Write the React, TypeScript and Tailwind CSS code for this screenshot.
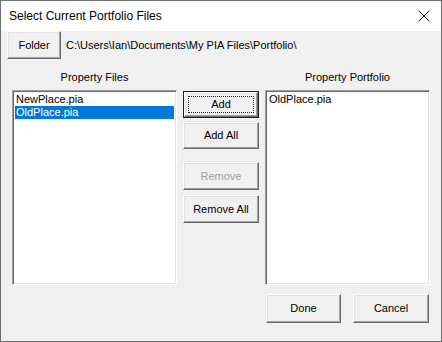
import React from "react";

const ui = { fontFamily: '"Liberation Sans", Arial, sans-serif' };

const raised =
  "border border-t-white border-l-white border-r-[#696969] border-b-[#696969] shadow-[inset_-1px_-1px_0_#a0a0a0,inset_1px_1px_0_#e3e3e3] bg-[#f0f0f0]";

function Btn({
  label,
  w,
  h = 28,
  disabled,
  isDefault,
}: {
  label: string;
  w: string;
  h?: number;
  disabled?: boolean;
  isDefault?: boolean;
}) {
  if (isDefault) {
    return (
      <div className={`${w} border border-[#1e1e1e] flex`} style={{ height: h }}>
        <div className={`flex-1 ${raised} p-[3px] flex`}>
          <div className="flex-1 border border-dotted border-[#222] flex items-center justify-center text-[11px] text-black">
            {label}
          </div>
        </div>
      </div>
    );
  }
  return (
    <div
      className={`${w} ${raised} flex items-center justify-center text-[11px] ${
        disabled ? "text-[#a0a0a0]" : "text-black"
      }`}
      style={{ height: h }}
    >
      {label}
    </div>
  );
}

function ListBox({ items, selected }: { items: string[]; selected?: number }) {
  return (
    <div className="w-[165px] h-[195px] bg-white border border-t-[#a0a0a0] border-l-[#a0a0a0] border-r-white border-b-white shadow-[inset_1px_1px_0_#696969,inset_-1px_-1px_0_#e3e3e3] p-[2px]">
      {items.map((it, i) => (
        <div
          key={it}
          className={`h-[13px] leading-[13px] text-[11px] pl-[1px] ${
            i === selected ? "bg-[#0078d7] text-white" : "text-black"
          }`}
        >
          {it}
        </div>
      ))}
    </div>
  );
}

export default function App() {
  return (
    <div
      className="w-[442px] h-[342px] border border-[#6f6f6f] flex flex-col bg-[#f0f0f0] overflow-hidden"
      style={ui}
    >
      <div className="h-[30px] bg-white flex items-center justify-between pl-[8px] pr-[10px] shrink-0">
        <span className="text-[12px] text-black">Select Current Portfolio Files</span>
        <svg width="12" height="12" viewBox="0 0 12 12" className="mr-[1px]">
          <path d="M0.5 0.5 L11.5 11.5 M11.5 0.5 L0.5 11.5" stroke="#111" strokeWidth="1" />
        </svg>
      </div>

      <div className="flex items-center pl-[6px] h-[28px] shrink-0">
        <Btn label="Folder" w="w-[54px]" />
        <span className="ml-[5px] text-[11px] text-black">C:\Users\Ian\Documents\My PIA Files\Portfolio\</span>
      </div>

      <div className="flex pl-[11px] shrink-0">
        <div className="flex flex-col pt-[11px]">
          <div className="h-[14px] leading-[14px] text-[11px] text-black text-center">Property Files</div>
          <div className="mt-[6px]">
            <ListBox items={["NewPlace.pia", "OldPlace.pia"]} selected={1} />
          </div>
        </div>

        <div className="flex flex-col pt-[32px] ml-[6px] w-[76px]">
          <Btn label="Add" w="w-[76px]" h={27} isDefault />
          <div className="mt-[4px]">
            <Btn label="Add All" w="w-[76px]" h={27} />
          </div>
          <div className="mt-[13px]">
            <Btn label="Remove" w="w-[76px]" h={28} disabled />
          </div>
          <div className="mt-[5px]">
            <Btn label="Remove All" w="w-[76px]" h={28} />
          </div>
        </div>

        <div className="flex flex-col pt-[11px] ml-[6px]">
          <div className="h-[14px] leading-[14px] text-[11px] text-black text-center">Property Portfolio</div>
          <div className="mt-[6px]">
            <ListBox items={["OldPlace.pia"]} />
          </div>
        </div>
      </div>

      <div className="flex justify-end gap-[12px] pr-[12px] mt-[9px]">
        <Btn label="Done" w="w-[75px]" h={29} />
        <Btn label="Cancel" w="w-[76px]" h={29} />
      </div>
    </div>
  );
}
